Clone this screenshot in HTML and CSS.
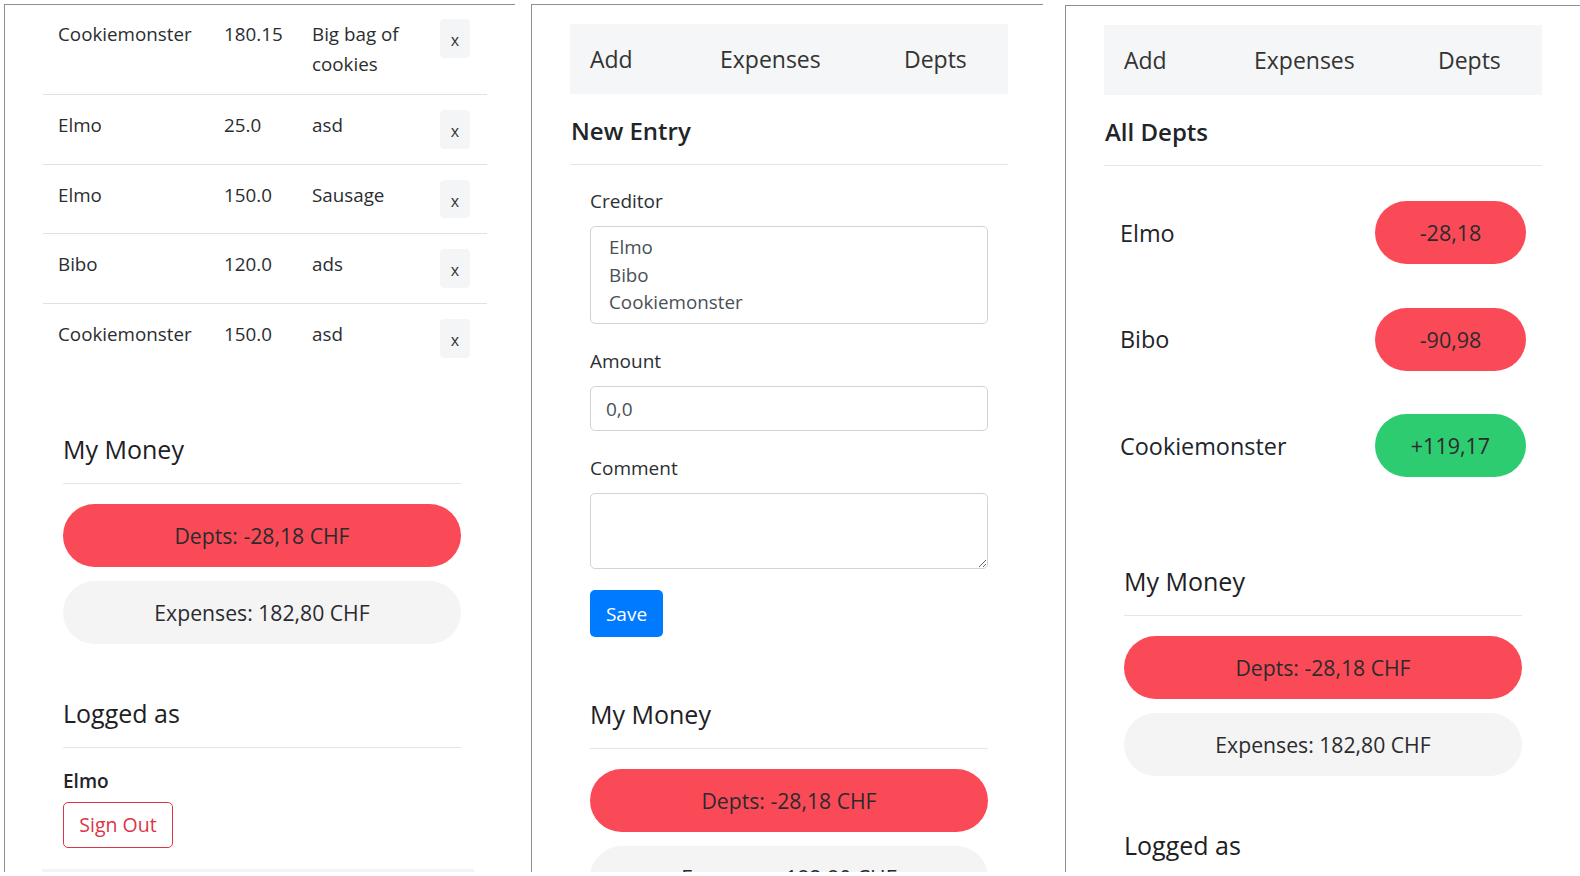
FILE: index.html
```html
<!DOCTYPE html>
<html lang="en">
<head>
<meta charset="utf-8">
<title>Money</title>
<link rel="stylesheet" href="styles.css">
</head>
<body>
<div class="screens">

  <section class="panel panel--list">
    <div class="wrap">
      <div class="entries">
        <div class="entry entry--first">
          <span class="cell">Cookiemonster</span>
          <span class="cell">180.15</span>
          <span class="cell">Big bag of cookies</span>
          <span class="cell cell--action"><button class="btn-x">x</button></span>
        </div>
        <div class="entry">
          <span class="cell">Elmo</span>
          <span class="cell">25.0</span>
          <span class="cell">asd</span>
          <span class="cell cell--action"><button class="btn-x">x</button></span>
        </div>
        <div class="entry">
          <span class="cell">Elmo</span>
          <span class="cell">150.0</span>
          <span class="cell">Sausage</span>
          <span class="cell cell--action"><button class="btn-x">x</button></span>
        </div>
        <div class="entry">
          <span class="cell">Bibo</span>
          <span class="cell">120.0</span>
          <span class="cell">ads</span>
          <span class="cell cell--action"><button class="btn-x">x</button></span>
        </div>
        <div class="entry">
          <span class="cell">Cookiemonster</span>
          <span class="cell">150.0</span>
          <span class="cell">asd</span>
          <span class="cell cell--action"><button class="btn-x">x</button></span>
        </div>
      </div>

      <div class="card money money--list">
        <h5 class="card-title">My Money</h5>
        <hr class="rule">
        <div class="pill-lg pill--red">Depts: -28,18 CHF</div>
        <div class="pill-lg pill--gray">Expenses: 182,80 CHF</div>
      </div>

      <div class="card logged">
        <h5 class="card-title">Logged as</h5>
        <hr class="rule rule--tight">
        <div class="user-name">Elmo</div>
        <button class="btn-signout">Sign Out</button>
      </div>

      <div class="footer-bar"></div>
    </div>
  </section>

  <section class="panel panel--add">
    <div class="wrap">
      <nav class="tabs">
        <span class="tab">Add</span>
        <span class="tab">Expenses</span>
        <span class="tab">Depts</span>
      </nav>
      <h4 class="page-title">New Entry</h4>
      <hr class="rule rule--page">

      <form class="card entry-form">
        <div class="field">
          <label class="label">Creditor</label>
          <div class="select-box">
            <div class="option">Elmo</div>
            <div class="option">Bibo</div>
            <div class="option">Cookiemonster</div>
          </div>
        </div>
        <div class="field">
          <label class="label">Amount</label>
          <input class="text-input" type="text" value="0,0">
        </div>
        <div class="field">
          <label class="label">Comment</label>
          <textarea class="text-area"></textarea>
        </div>
        <button type="button" class="btn-save">Save</button>
      </form>

      <div class="card money money--add">
        <h5 class="card-title">My Money</h5>
        <hr class="rule">
        <div class="pill-lg pill--red">Depts: -28,18 CHF</div>
        <div class="pill-lg pill--gray">Expenses: 182,80 CHF</div>
      </div>
    </div>
  </section>

  <section class="panel panel--depts">
    <div class="wrap">
      <nav class="tabs">
        <span class="tab">Add</span>
        <span class="tab">Expenses</span>
        <span class="tab">Depts</span>
      </nav>
      <h4 class="page-title">All Depts</h4>
      <hr class="rule rule--page">

      <div class="debtors">
        <div class="debtor">
          <span class="debtor-name">Elmo</span>
          <span class="pill-sm pill--red">-28,18</span>
        </div>
        <div class="debtor">
          <span class="debtor-name">Bibo</span>
          <span class="pill-sm pill--red">-90,98</span>
        </div>
        <div class="debtor">
          <span class="debtor-name">Cookiemonster</span>
          <span class="pill-sm pill--green">+119,17</span>
        </div>
      </div>

      <div class="card money money--depts">
        <h5 class="card-title">My Money</h5>
        <hr class="rule">
        <div class="pill-lg pill--red">Depts: -28,18 CHF</div>
        <div class="pill-lg pill--gray">Expenses: 182,80 CHF</div>
      </div>

      <div class="card logged">
        <h5 class="card-title">Logged as</h5>
      </div>
    </div>
  </section>

</div>
</body>
</html>
```

FILE: styles.css
```css
* { box-sizing: border-box; }

html, body {
  margin: 0;
  background: #ffffff;
}

body {
  width: 1580px;
  height: 876px;
  overflow: hidden;
  font-family: "Open Sans", "Noto Sans", sans-serif;
  color: #212529;
}

.screens {
  display: flex;
  align-items: flex-start;
  padding-top: 4px;
}

.panel {
  flex: none;
  height: 868px;
  overflow: hidden;
  border-left: 1px solid #8f8f8f;
  border-top: 1px solid #8f8f8f;
}

.panel--list { margin-left: 4px; width: 511px; }
.panel--add { margin-left: 16px; width: 512px; }
.panel--depts { margin-left: 22px; margin-top: 1px; width: 515px; height: 867px; }

.wrap {
  width: 438px;
  margin-left: 38px;
}

/* ---------- entries table ---------- */
.entries { width: 444px; }

.entry {
  display: grid;
  grid-template-columns: 166px 88px 128px 62px;
  border-top: 1px solid #dee2e6;
}

.entry--first { border-top: 0; }

.cell {
  padding: 15px;
  font-size: 18.8px;
  line-height: 30px;
  color: #2a2d31;
}

.entry--first .cell { padding-top: 14px; }

.btn-x {
  display: flex;
  align-items: center;
  justify-content: center;
  width: 30px;
  height: 38.7px;
  padding: 3px 0 0;
  border: 1px solid #f4f5f6;
  border-radius: 4px;
  background: #f4f5f6;
  font-family: inherit;
  font-size: 16px;
  color: #333;
}

/* ---------- cards ---------- */
.card { padding: 0 20px; }

.card-title {
  margin: 0;
  font-size: 25px;
  line-height: 30px;
  font-weight: 500;
  color: #1d2024;
}

.rule {
  height: 1px;
  margin: 19px 0 20px;
  border: 0;
  background: #e5e6e8;
}

.rule--tight { margin-bottom: 18px; }

.rule--page { margin: 18px 0 0; }

.pill-lg {
  display: flex;
  align-items: center;
  justify-content: center;
  height: 63px;
  border-radius: 32px;
  font-size: 21.2px;
  color: #2b2b2e;
}

.pill-lg + .pill-lg { margin-top: 14px; }

.pill--red { background: #fb4a57; }
.pill--gray { background: #f4f4f5; }
.pill--green { background: #2ecc71; }

.money--list { margin-top: 61px; }
.money--add { margin-top: 62px; }
.money--depts { margin-top: 89px; }

.logged { margin-top: 54px; }

.user-name {
  font-size: 19px;
  line-height: 30px;
  font-weight: 600;
}

.btn-signout {
  display: block;
  width: 110px;
  height: 46px;
  margin-top: 6px;
  padding: 0;
  border: 1px solid #dc3545;
  border-radius: 5px;
  background: #fff;
  font-family: inherit;
  font-size: 19.5px;
  color: #dc3545;
}

.footer-bar {
  width: 432px;
  height: 20px;
  margin-top: 21px;
  margin-left: -1px;
  background: #f3f3f4;
}

/* ---------- nav ---------- */
.tabs {
  display: grid;
  grid-template-columns: 130px 184px auto;
  align-items: center;
  height: 70px;
  margin-top: 19px;
  padding-left: 20px;
  background: #f5f6f7;
  font-size: 23px;
  color: #333;
}

.page-title {
  margin: 22px 0 0 1px;
  font-size: 24px;
  line-height: 30px;
  font-weight: 600;
  color: #212529;
}

/* ---------- form ---------- */
.entry-form { margin-top: 21px; }

.field + .field { margin-top: 22px; }

.label {
  display: block;
  font-size: 19px;
  line-height: 30px;
  color: #2b2f33;
}

.select-box {
  height: 98px;
  margin-top: 10px;
  padding: 7px 18px;
  border: 1px solid #ced4da;
  border-radius: 5px;
}

.option {
  font-size: 18.8px;
  line-height: 27.5px;
  color: #495057;
}

.text-input {
  display: block;
  width: 100%;
  height: 45px;
  margin-top: 10px;
  padding: 0 15px;
  border: 1px solid #ced4da;
  border-radius: 5px;
  font-family: inherit;
  font-size: 19px;
  color: #495057;
}

.text-area {
  display: block;
  width: 100%;
  height: 76px;
  margin-top: 10px;
  border: 1px solid #ced4da;
  border-radius: 5px;
  resize: vertical;
  font-family: inherit;
}

.btn-save {
  display: block;
  width: 73px;
  height: 47px;
  margin-top: 21px;
  padding: 0;
  border: 0;
  border-radius: 5px;
  background: #007bff;
  font-family: inherit;
  font-size: 19px;
  font-weight: 500;
  color: #ffffff;
}

/* ---------- debtors ---------- */
.debtors { margin-top: 35px; }

.debtor {
  display: flex;
  align-items: center;
  justify-content: space-between;
  height: 63px;
  padding: 0 16px;
}

.debtor + .debtor { margin-top: 43.5px; }

.debtor-name {
  font-size: 23.4px;
  color: #212529;
}

.pill-sm {
  display: flex;
  align-items: center;
  justify-content: center;
  width: 151px;
  height: 63px;
  border-radius: 32px;
  font-size: 21.5px;
  color: #2b2b2e;
}
```
